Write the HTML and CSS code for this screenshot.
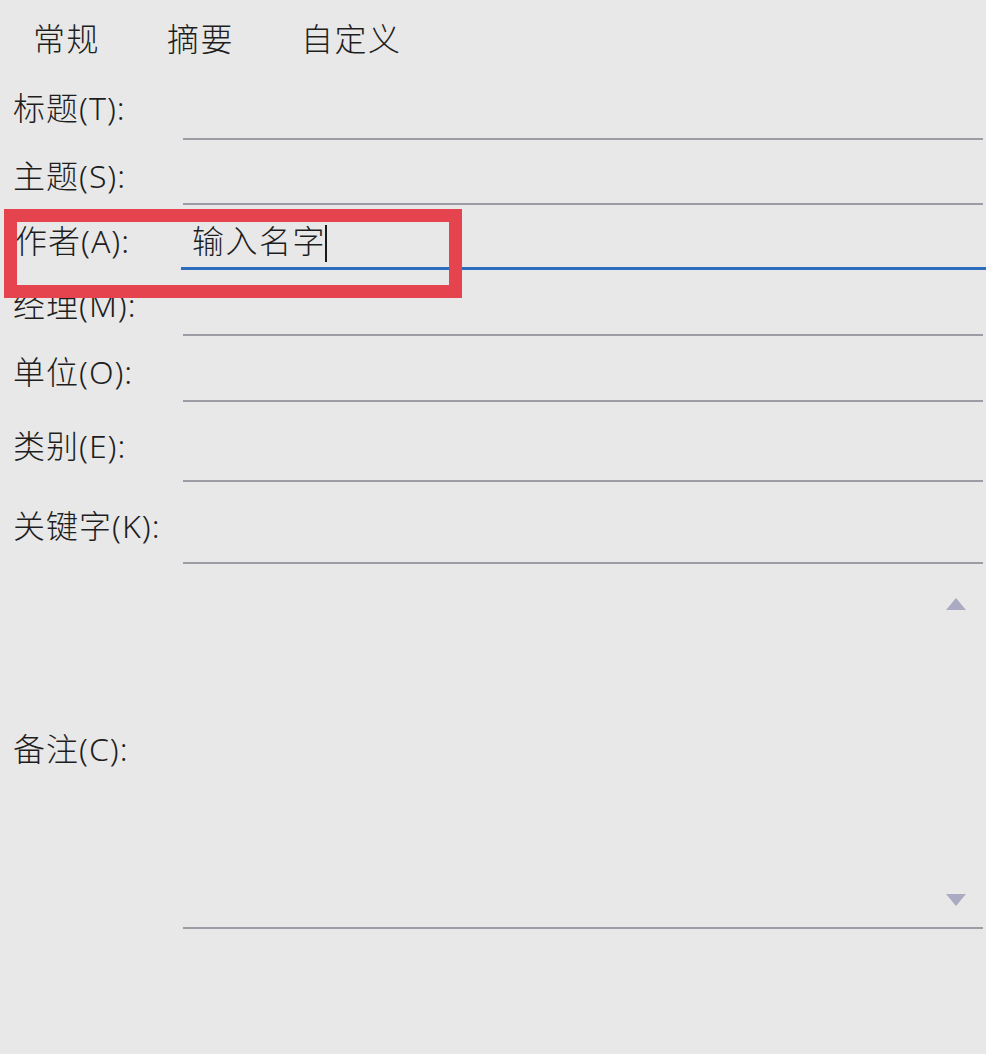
FILE: index.html
```html
<!DOCTYPE html>
<html lang="zh-CN">
<head>
<meta charset="utf-8">
<title>属性</title>
<link rel="stylesheet" href="styles.css">
</head>
<body>
<div class="page">
  <div class="tabs">
    <span class="tab">常规</span>
    <span class="tab">摘要</span>
    <span class="tab">自定义</span>
  </div>
  <div class="form">
    <div class="row r-title"><div class="label">标题(T):</div><div class="field"></div></div>
    <div class="row r-subject"><div class="label">主题(S):</div><div class="field"></div></div>
    <div class="row r-author"><div class="label">作者(A):</div><div class="field active"><span class="value">输入名字</span><span class="caret"></span></div></div>
    <div class="row r-manager"><div class="label">经理(M):</div><div class="field"></div></div>
    <div class="row r-unit"><div class="label">单位(O):</div><div class="field"></div></div>
    <div class="row r-cat"><div class="label">类别(E):</div><div class="field"></div></div>
    <div class="row r-key"><div class="label">关键字(K):</div><div class="field"></div></div>
    <div class="row r-note"><div class="label">备注(C):</div>
      <div class="field notes">
        <svg class="arrow" width="22" height="14" viewBox="0 0 22 14"><polygon points="11,1 21,13 1,13"/></svg>
        <svg class="arrow" width="22" height="14" viewBox="0 0 22 14"><polygon points="1,1 21,1 11,13"/></svg>
      </div>
    </div>
  </div>
  <div class="highlight"></div>
</div>
</body>
</html>
```

FILE: styles.css
```css
html, body {
  margin: 0;
  padding: 0;
  background: #e8e8e8;
}
body {
  width: 986px;
  height: 1054px;
  overflow: hidden;
  font-family: "Noto Sans", "Noto Sans CJK SC", sans-serif;
  font-weight: 300;
  color: #1e1e1e;
  font-size: 32px;
  line-height: 40px;
  letter-spacing: 1px;
}
.page {
  position: relative;
  height: 1054px;
}
.tabs {
  display: flex;
  gap: 67px;
  height: 72px;
  box-sizing: border-box;
  padding: 19px 0 0 33px;
}
.tab {
  white-space: nowrap;
  letter-spacing: 1.5px;
}
.form {
  display: flex;
  flex-direction: column;
}
.row {
  display: grid;
  grid-template-columns: 183px 1fr;
}
.label {
  padding-left: 13px;
  white-space: nowrap;
}
.field {
  border-bottom: 2px solid #9c9ca4;
  margin-right: 3px;
}
.r-title { height: 68px; }
.r-title .label { padding-top: 16px; }
.r-subject { height: 65px; }
.r-subject .label { padding-top: 16px; }
.r-author { height: 65px; }
.r-author .label { padding-top: 16px; padding-left: 15px; }
.r-manager { height: 66px; }
.r-manager .label { padding-top: 15px; }
.r-unit { height: 66px; }
.r-unit .label { padding-top: 16px; }
.r-cat { height: 80px; }
.r-cat .label { padding-top: 24px; }
.r-key { height: 82px; }
.r-key .label { padding-top: 24px; }
.r-note { height: 365px; }
.r-note .label { padding-top: 165px; }

.field.active {
  border-bottom: 3px solid #2d6dbf;
  margin-left: -2px;
  margin-right: 0;
  display: flex;
  align-items: flex-start;
  padding-left: 11px;
  padding-top: 16px;
}
.value {
  letter-spacing: 1.5px;
  white-space: nowrap;
}
.caret {
  display: inline-block;
  width: 2px;
  height: 37px;
  margin-top: 4px;
  margin-left: -1px;
  background: #1a1a1a;
}
.notes {
  display: flex;
  flex-direction: column;
  justify-content: space-between;
  align-items: flex-end;
  padding: 33px 16px 20px 0;
}
.arrow {
  display: block;
}
.arrow polygon {
  fill: #aaaac2;
}
.highlight {
  position: absolute;
  left: 4px;
  top: 209px;
  width: 458px;
  height: 89px;
  box-sizing: border-box;
  border: 13px solid #e5444e;
  pointer-events: none;
}
```
